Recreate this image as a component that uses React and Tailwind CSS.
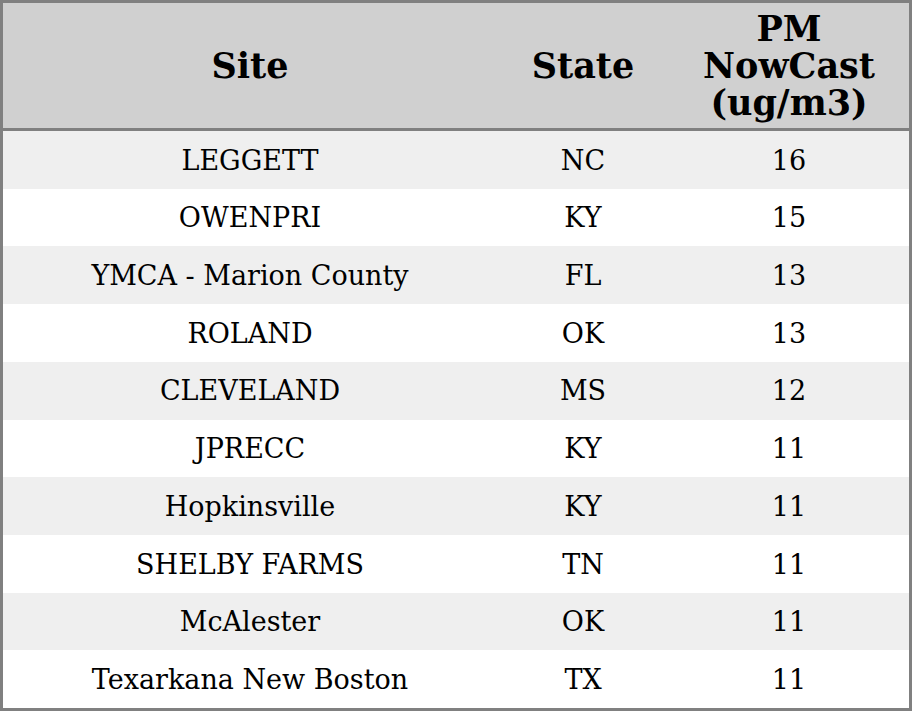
export default function App() {
  const rows = [
    ["LEGGETT", "NC", "16"],
    ["OWENPRI", "KY", "15"],
    ["YMCA - Marion County", "FL", "13"],
    ["ROLAND", "OK", "13"],
    ["CLEVELAND", "MS", "12"],
    ["JPRECC", "KY", "11"],
    ["Hopkinsville", "KY", "11"],
    ["SHELBY FARMS", "TN", "11"],
    ["McAlester", "OK", "11"],
    ["Texarkana New Boston", "TX", "11"],
  ];
  return (
    <div className="w-[912px] h-[711px] bg-white border-[3px] border-[#808080] flex flex-col text-black" style={{ fontFamily: '"DejaVu Serif", serif' }}>
      <div className="h-[128px] bg-[#d0d0d0] border-b-[3px] border-[#808080] grid grid-cols-[494px_172px_240px] items-center text-center font-bold text-[35px] leading-[37px]">
        <div>Site</div>
        <div>State</div>
        <div>PM<br />NowCast<br />(ug/m3)</div>
      </div>
      <div className="flex-1 flex flex-col">
        {rows.map((r, i) => (
          <div key={i} className={`flex-1 grid grid-cols-[494px_172px_240px] items-center text-center text-[27px] pt-[2px] ${i % 2 === 0 ? "bg-[#efefef]" : "bg-white"}`}>
            <div>{r[0]}</div>
            <div>{r[1]}</div>
            <div>{r[2]}</div>
          </div>
        ))}
      </div>
    </div>
  );
}
